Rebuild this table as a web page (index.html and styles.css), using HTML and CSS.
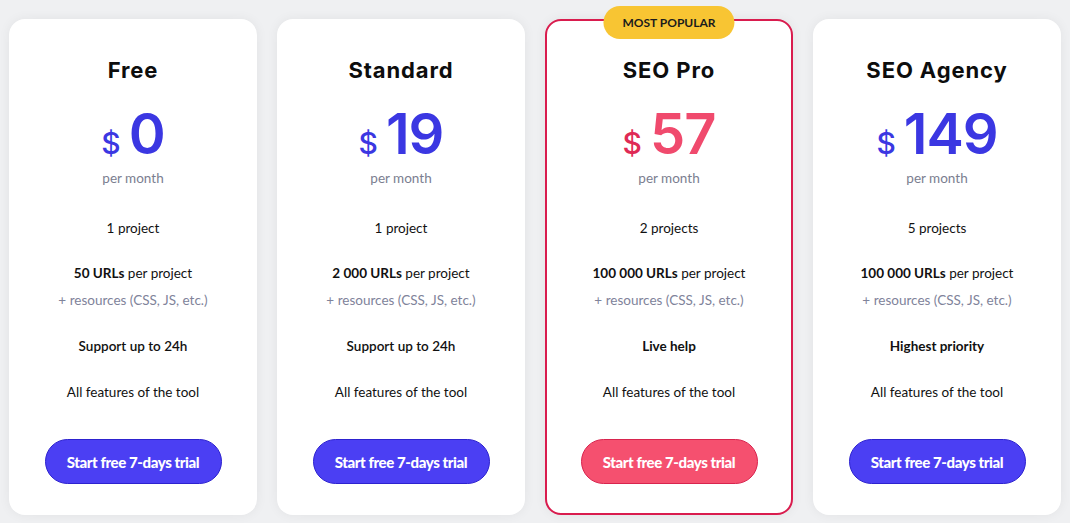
FILE: index.html
```html
<!DOCTYPE html>
<html lang="en">
<head>
    <meta charset="UTF-8">
    <meta name="viewport" content="width=device-width, initial-scale=1.0">
    <title>Pricing</title>
    <link rel="stylesheet" href="styles.css">
</head>
<body>
    <div class="plans">
        <div class="plan">
            <h2>Free</h2>
            <div class="price"><span class="cur">$</span><span class="amount">0</span></div>
            <p class="period">per month</p>
            <p class="projects">1 project</p>
            <p class="urls"><b>50 URLs</b> per project</p>
            <p class="extra">+ resources (CSS, JS, etc.)</p>
            <p class="support">Support up to 24h</p>
            <p class="features">All features of the tool</p>
            <button class="trial">Start free 7-days trial</button>
        </div>

        <div class="plan">
            <h2>Standard</h2>
            <div class="price"><span class="cur">$</span><span class="amount">19</span></div>
            <p class="period">per month</p>
            <p class="projects">1 project</p>
            <p class="urls"><b>2 000 URLs</b> per project</p>
            <p class="extra">+ resources (CSS, JS, etc.)</p>
            <p class="support">Support up to 24h</p>
            <p class="features">All features of the tool</p>
            <button class="trial">Start free 7-days trial</button>
        </div>

        <div class="plan popular">
            <span class="badge">MOST POPULAR</span>
            <h2>SEO Pro</h2>
            <div class="price"><span class="cur">$</span><span class="amount">57</span></div>
            <p class="period">per month</p>
            <p class="projects">2 projects</p>
            <p class="urls"><b>100 000 URLs</b> per project</p>
            <p class="extra">+ resources (CSS, JS, etc.)</p>
            <p class="support strong">Live help</p>
            <p class="features">All features of the tool</p>
            <button class="trial">Start free 7-days trial</button>
        </div>

        <div class="plan">
            <h2>SEO Agency</h2>
            <div class="price"><span class="cur">$</span><span class="amount">149</span></div>
            <p class="period">per month</p>
            <p class="projects">5 projects</p>
            <p class="urls"><b>100 000 URLs</b> per project</p>
            <p class="extra">+ resources (CSS, JS, etc.)</p>
            <p class="support strong">Highest priority</p>
            <p class="features">All features of the tool</p>
            <button class="trial">Start free 7-days trial</button>
        </div>
    </div>
</body>
</html>
```

FILE: styles.css
```css
body {
    font-family: Lato, "Open Sans", sans-serif;
    background-color: #eff0f2;
    margin: 0;
    padding: 0;
    color: #111;
}
.plans {
    display: grid;
    grid-template-columns: repeat(4, 248px);
    gap: 20px;
    padding: 19px 9px 8px;
}
.plan {
    position: relative;
    background: #fff;
    border-radius: 16px;
    box-shadow: 0 0 12px rgba(0, 0, 0, 0.06);
    text-align: center;
    padding: 37px 0 31px;
    display: flex;
    flex-direction: column;
    align-items: center;
    box-sizing: border-box;
    height: 496px;
}
.plan.popular {
    border: 2px solid #d91c4e;
    padding-top: 35px;
}
.badge {
    position: absolute;
    top: -15px;
    left: 50%;
    transform: translateX(-50%);
    background: #f8c533;
    color: #1c1c1c;
    font-size: 12px;
    font-weight: 700;
    padding: 0 19px;
    height: 33px;
    line-height: 33px;
    border-radius: 17px;
    white-space: nowrap;
}
h2 {
    font-family: Inter, "DejaVu Sans", sans-serif;
    font-size: 22px;
    font-weight: 700;
    line-height: 28px;
    letter-spacing: 0.9px;
    margin: 0;
    color: #0d0d0d;
}
.price {
    display: flex;
    align-items: baseline;
    justify-content: center;
    gap: 8px;
    margin-top: 20px;
    height: 60px;
    line-height: 60px;
    font-family: Inter, "DejaVu Sans", sans-serif;
    color: #3b37e2;
}
.cur {
    font-size: 30px;
    font-weight: 500;
}
.amount {
    font-size: 56px;
    font-weight: 600;
    letter-spacing: -1px;
}
.popular .price {
    color: #f04a6d;
}
.popular .cur {
    color: #df2a55;
}
p {
    margin: 0;
    font-size: 13.5px;
    line-height: 20px;
}
.period {
    margin-top: 4px;
    color: #7b7e90;
}
.projects {
    margin-top: 30px;
}
.urls {
    margin-top: 25px;
}
.urls b {
    font-weight: 700;
}
.extra {
    margin-top: 7px;
    color: #80839a;
}
.support {
    margin-top: 26px;
    font-weight: 600;
}
.support.strong {
    font-weight: 700;
}
.features {
    margin-top: 26px;
}
.trial {
    flex-shrink: 0;
    margin-top: 37px;
    width: 177px;
    height: 45px;
    border-radius: 23px;
    border: 1px solid #2d22cf;
    background: #4b3ff3;
    color: #fff;
    font-family: Lato, sans-serif;
    font-size: 15px;
    font-weight: 900;
    letter-spacing: -0.4px;
    cursor: pointer;
}
.popular .trial {
    background: #f5506f;
    border-color: #d8244e;
}
```
